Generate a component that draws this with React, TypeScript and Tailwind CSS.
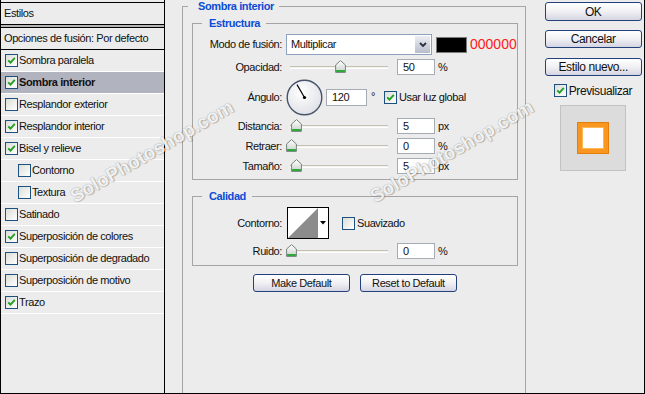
import React from 'react';

type Layer = { label: string; checked?: boolean; active?: boolean; sub?: boolean };

const layers: Layer[] = [
  { label: 'Sombra paralela', checked: true },
  { label: 'Sombra interior', checked: true, active: true },
  { label: 'Resplandor exterior' },
  { label: 'Resplandor interior', checked: true },
  { label: 'Bisel y relieve', checked: true },
  { label: 'Contorno', sub: true },
  { label: 'Textura', sub: true },
  { label: 'Satinado' },
  { label: 'Superposición de colores', checked: true },
  { label: 'Superposición de degradado' },
  { label: 'Superposición de motivo' },
  { label: 'Trazo', checked: true },
];

function Check({ checked }: { checked?: boolean }) {
  return (
    <span className="flex h-[13px] w-[13px] shrink-0 items-center justify-center border border-[#1c5180] bg-linear-to-br from-[#dcdcd7] to-white">
      {checked && (
        <svg width="9" height="9" viewBox="0 0 9 9">
          <path d="M1.2 4.3 L3.5 6.6 L7.8 1.8" fill="none" stroke="#21a121" strokeWidth="1.9" />
        </svg>
      )}
    </span>
  );
}

function Thumb() {
  return (
    <svg width="11" height="13" viewBox="0 0 11 13">
      <defs>
        <linearGradient id="thumbg" x1="0" y1="0" x2="0" y2="1">
          <stop offset="0" stopColor="#ffffff" />
          <stop offset="1" stopColor="#c9d1cb" />
        </linearGradient>
      </defs>
      <path d="M5.5 0.6 L10.4 5 L10.4 12.4 L0.6 12.4 L0.6 5 Z" fill="url(#thumbg)" stroke="#75847a" strokeWidth="1" />
      <rect x="1.1" y="10" width="8.8" height="2" fill="#2fa83a" />
    </svg>
  );
}

// value = thumb offset in px from the slider's left edge
function Slider({ value }: { value: number }) {
  return (
    <div className="relative ml-[4px] h-[16px] w-[102px]">
      <div className="absolute left-[4px] right-0 top-[7px] h-[3px] border-t border-[#c3c0b6] bg-[#f3f2ec] border-b border-b-white" />
      <div className="absolute top-[1px]" style={{ left: value }}>
        <Thumb />
      </div>
    </div>
  );
}

function Field({ value, className = '' }: { value: string; className?: string }) {
  return (
    <div className={`flex h-[16px] w-[38px] items-center border border-[#a5acb5] bg-white pl-[5px] ${className}`}>
      {value}
    </div>
  );
}

function Label({ children }: { children: React.ReactNode }) {
  return <span className="w-[89px] shrink-0 text-right">{children}</span>;
}

function SliderRow({ label, pos, value, unit, className = '' }: { label: string; pos: number; value: string; unit: string; className?: string }) {
  return (
    <div className={`flex h-[16px] items-center ${className}`}>
      <Label>{label}</Label>
      <Slider value={pos} />
      <Field value={value} className="ml-[9px]" />
      <span className="ml-[3px]">{unit}</span>
    </div>
  );
}

function Btn({ children, className = '' }: { children: React.ReactNode; className?: string }) {
  return (
    <button className={`flex w-[97px] items-center justify-center rounded-[3px] border border-[#23407a] bg-linear-to-b from-white via-[#f1f1f4] to-[#d3d5e2] text-[#111] ${className}`}>
      {children}
    </button>
  );
}

function Dial() {
  return (
    <svg width="37" height="37" viewBox="0 0 37 37" className="ml-[4px] shrink-0">
      <defs>
        <radialGradient id="dialg" cx="40%" cy="35%" r="70%">
          <stop offset="0" stopColor="#ffffff" />
          <stop offset="1" stopColor="#dfe0e6" />
        </radialGradient>
      </defs>
      <circle cx="18.5" cy="18.5" r="17.3" fill="url(#dialg)" stroke="#46536a" strokeWidth="1.4" />
      <line x1="18.5" y1="18.5" x2="11" y2="5.6" stroke="#000" strokeWidth="1.2" />
      <circle cx="18.5" cy="18.5" r="1.6" fill="#000" />
    </svg>
  );
}

export default function App() {
  return (
    <div className="relative flex h-[394px] w-[645px] overflow-hidden border-x border-b border-black bg-[#ececec] font-['Liberation_Sans',Arial,sans-serif] text-[11px] tracking-[-0.4px] text-[#111]">
      {/* styles list */}
      <div className="flex w-[164px] shrink-0 flex-col border-r border-black pt-[2px]">
        <div className="flex h-[23px] items-center border-y border-black pl-[3px]">Estilos</div>
        <div className="h-[2px] bg-[#b4b4b4]" />
        <div className="flex h-[23px] items-center border-y border-black pl-[3px]">Opciones de fusión: Por defecto</div>
        {layers.map((l) => (
          <div
            key={l.label}
            className={`flex h-[22px] items-center gap-[1px] border-b border-white ${l.sub ? 'pl-[17px]' : 'pl-[4px]'} ${l.active ? 'bg-[#b1b3be] font-bold' : ''}`}
          >
            <Check checked={l.checked} />
            <span>{l.label}</span>
          </div>
        ))}
      </div>

      {/* settings */}
      <div className="flex shrink-0 pl-[17px]">
        <fieldset className="w-[343px] self-stretch border-x border-t border-[#a5a5a5]">
          <legend className="ml-[5px] pl-[10px] pr-[5px] font-bold leading-[13px] text-[#0b4bd6]">Sombra interior</legend>
          <div className="pl-[9px] pr-[7px] pt-[4px]">
            <fieldset className="border border-[#a5a5a5] pb-[5px]">
              <legend className="ml-[9px] pl-[7px] pr-[6px] font-bold leading-[13px] text-[#0b4bd6]">Estructura</legend>
              <div className="mt-[4px] flex h-[21px] items-center">
                <Label>Modo de fusión:</Label>
                <div className="ml-[4px] flex h-[21px] w-[146px] items-center border border-[#8da2bf] bg-white">
                  <span className="flex-1 pl-[4px]">Multiplicar</span>
                  <span className="flex h-[19px] w-[17px] items-center justify-center border border-white bg-linear-to-b from-[#eceef4] to-[#b8bdcc]">
                    <svg width="8" height="6" viewBox="0 0 8 6">
                      <path d="M1 1 L4 4 L7 1" fill="none" stroke="#2b2f3a" strokeWidth="1.8" />
                    </svg>
                  </span>
                </div>
                <div className="ml-[4px] h-[16px] w-[31px] border border-[#7c7c7c] bg-black" />
                <span className="ml-[3px] text-[14px] tracking-normal text-[#ff1a1a]">000000</span>
              </div>
              <SliderRow label="Opacidad:" pos={49} value="50" unit="%" className="mt-[4px]" />
              <div className="mt-[4px] flex h-[36px] items-center">
                <Label>Ángulo:</Label>
                <Dial />
                <div className="ml-[3px] flex h-[17px] w-[41px] items-center border border-[#a5acb5] bg-white pl-[5px]">120</div>
                <span className="ml-[4px] self-start pt-[9px]">°</span>
                <span className="ml-[9px]">
                  <Check checked />
                </span>
                <span className="ml-[2px]">Usar luz global</span>
              </div>
              <SliderRow label="Distancia:" pos={5} value="5" unit="px" className="mt-[3px]" />
              <SliderRow label="Retraer:" pos={0} value="0" unit="%" className="mt-[4px]" />
              <SliderRow label="Tamaño:" pos={5} value="5" unit="px" className="mt-[4px]" />
            </fieldset>

            <fieldset className="mt-[10px] border border-[#a5a5a5] pb-[6px]">
              <legend className="ml-[9px] pl-[7px] pr-[6px] font-bold leading-[13px] text-[#0b4bd6]">Calidad</legend>
              <div className="mt-[4px] flex h-[32px] items-center">
                <Label>Contorno:</Label>
                <div className="ml-[5px] flex h-[32px] w-[42px] border border-black bg-white">
                  <svg width="30" height="30" viewBox="0 0 30 30">
                    <polygon points="0,30 30,0 30,30" fill="#8c8c8c" />
                  </svg>
                  <span className="flex flex-1 items-center justify-center">
                    <svg width="6" height="4" viewBox="0 0 6 4">
                      <polygon points="0,0 6,0 3,3.5" fill="#000" />
                    </svg>
                  </span>
                </div>
                <span className="ml-[13px]">
                  <Check />
                </span>
                <span className="ml-[2px]">Suavizado</span>
              </div>
              <SliderRow label="Ruido:" pos={0} value="0" unit="%" className="mt-[4px]" />
            </fieldset>

            <div className="mt-[8px] flex justify-center gap-[10px]">
              <Btn className="h-[18px]">Make Default</Btn>
              <Btn className="h-[18px]">Reset to Default</Btn>
            </div>
          </div>
        </fieldset>
      </div>

      {/* actions */}
      <div className="ml-[19px] flex w-[98px] shrink-0 flex-col text-[12px]">
        <Btn className="mt-[2px] h-[19px]">OK</Btn>
        <Btn className="mt-[9px] h-[18px]">Cancelar</Btn>
        <Btn className="mt-[10px] h-[18px]">Estilo nuevo...</Btn>
        <div className="mt-[8px] flex h-[13px] items-center gap-[2px] pl-[9px]">
          <Check checked />
          <span>Previsualizar</span>
        </div>
        <div className="ml-[15px] mt-[8px] flex h-[66px] w-[66px] items-center justify-center border border-[#c2c2c2] bg-[#dcdcdc]">
          <div className="h-[32px] w-[32px] border border-[#e57d0a] bg-[#f8961f] p-[4px]">
            <div className="h-full w-full border border-[#ffb757] bg-white" />
          </div>
        </div>
      </div>

      {/* watermark */}
      <span className="pointer-events-none absolute left-[151px] top-[152px] -translate-x-1/2 -translate-y-1/2 -rotate-30 whitespace-nowrap text-[19px] font-bold tracking-normal text-white/90 [text-shadow:0_0_1px_rgba(0,0,0,0.45),1px_1px_1px_rgba(0,0,0,0.2)]">
        SoloPhotoshop.com
      </span>
      <span className="pointer-events-none absolute left-[451px] top-[152px] -translate-x-1/2 -translate-y-1/2 -rotate-30 whitespace-nowrap text-[19px] font-bold tracking-normal text-white/90 [text-shadow:0_0_1px_rgba(0,0,0,0.45),1px_1px_1px_rgba(0,0,0,0.2)]">
        SoloPhotoshop.com
      </span>
    </div>
  );
}
